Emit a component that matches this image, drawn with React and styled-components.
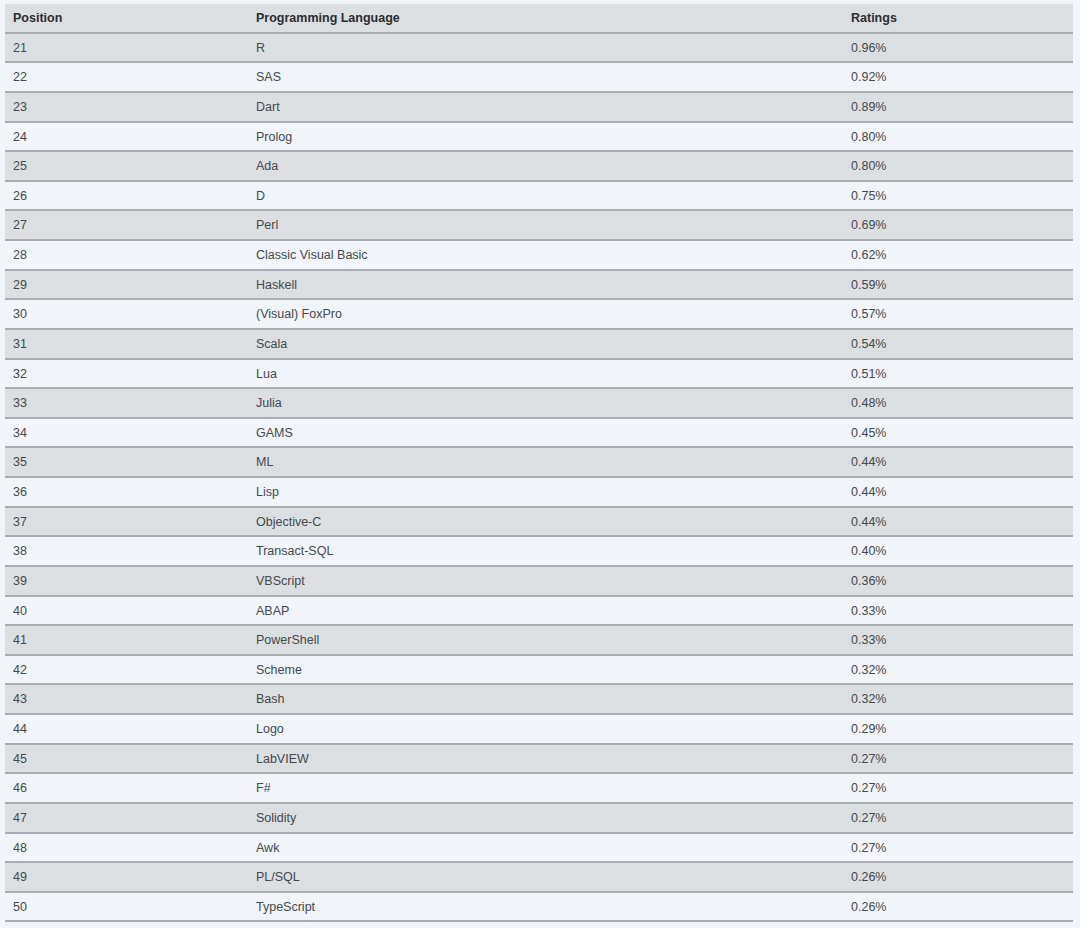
import { createGlobalStyle } from "styled-components";
import styled from "styled-components";

const Global = createGlobalStyle`
    body {
        margin: 0;
        background: #f1f5f9;
        font-family: "Liberation Sans", Arial, sans-serif;
    }
`

const Wrap = styled.div`
    padding: 4px 7px 0 5px;
`

const Table = styled.table`
    width: 1068px;
    table-layout: fixed;
    border-collapse: collapse;
    font-size: 12.5px;
    color: #45484c;
`

const Row = styled.tr`
    background: ${p => p.$shade ? "#dcdfe2" : "#f1f5f9"};
    border-bottom: 2px solid #a9acb0;
`

const Th = styled.th`
    text-align: left;
    font-weight: 700;
    color: #2b2d30;
    padding: 5px 8px 3px 8px;
    line-height: 19.62px;
    width: ${p => p.$w}px;
`

const Td = styled.td`
    padding: 5px 8px 3px 8px;
    line-height: 19.62px;
`

const rows = [
    ["R", "0.96%"], ["SAS", "0.92%"], ["Dart", "0.89%"], ["Prolog", "0.80%"],
    ["Ada", "0.80%"], ["D", "0.75%"], ["Perl", "0.69%"], ["Classic Visual Basic", "0.62%"],
    ["Haskell", "0.59%"], ["(Visual) FoxPro", "0.57%"], ["Scala", "0.54%"], ["Lua", "0.51%"],
    ["Julia", "0.48%"], ["GAMS", "0.45%"], ["ML", "0.44%"], ["Lisp", "0.44%"],
    ["Objective-C", "0.44%"], ["Transact-SQL", "0.40%"], ["VBScript", "0.36%"], ["ABAP", "0.33%"],
    ["PowerShell", "0.33%"], ["Scheme", "0.32%"], ["Bash", "0.32%"], ["Logo", "0.29%"],
    ["LabVIEW", "0.27%"], ["F#", "0.27%"], ["Solidity", "0.27%"], ["Awk", "0.27%"],
    ["PL/SQL", "0.26%"], ["TypeScript", "0.26%"],
]

const App = () => {
    return (
        <Wrap>
            <Global />
            <Table>
                <thead>
                    <Row $shade>
                        <Th $w={227}>Position</Th>
                        <Th $w={579}>Programming Language</Th>
                        <Th $w={214}>Ratings</Th>
                    </Row>
                </thead>
                <tbody>
                    {
                        rows.map((r, i) => (
                            <Row key={i} $shade={i % 2 === 0}>
                                <Td>{21 + i}</Td>
                                <Td>{r[0]}</Td>
                                <Td>{r[1]}</Td>
                            </Row>
                        ))
                    }
                </tbody>
            </Table>
        </Wrap>
    )
}

export default App;
